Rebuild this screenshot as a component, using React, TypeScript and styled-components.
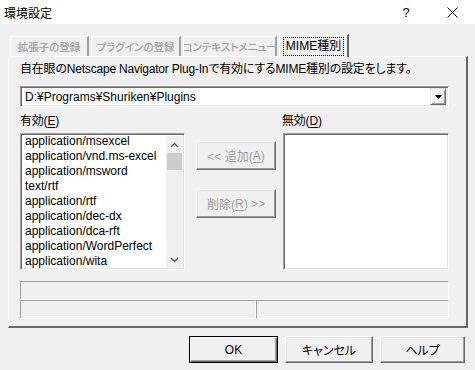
import React from 'react'
import styled, { createGlobalStyle } from 'styled-components'

const GlobalStyle = createGlobalStyle`
  html, body {
    margin: 0;
    padding: 0;
    background: #f0f0f0;
  }
  body {
    font-family: "Liberation Sans", "Noto Sans CJK JP", sans-serif;
    font-size: 12px;
    color: #000;
    font-feature-settings: "palt";
  }
`

const JP = `"Liberation Sans", "Noto Sans CJK JP", sans-serif`

const Window = styled.div`
  width: 475px;
  height: 370px;
  background: #f0f0f0;
  display: flex;
  flex-direction: column;
  overflow: hidden;
`

const TitleBar = styled.div`
  height: 24px;
  background: #fff;
  display: flex;
  align-items: center;
  padding-left: 4px;
  font-family: ${JP};
  font-size: 12px;
`

const Title = styled.span`
  flex: 1;
`

const TitleButton = styled.div`
  width: 46px;
  height: 24px;
  display: flex;
  align-items: center;
  justify-content: center;
  font-size: 13px;
`

const TabRow = styled.div`
  display: flex;
  align-items: flex-end;
  height: 23px;
  margin: 9px 0 0 10px;
  position: relative;
  z-index: 1;
`

const Tab = styled.div<{ $w: number; $active?: boolean }>`
  width: ${({ $w }) => $w}px;
  height: ${({ $active }) => ($active ? 23 : 20)}px;
  margin-right: ${({ $active }) => ($active ? 0 : 2)}px;
  margin-bottom: ${({ $active }) => ($active ? -1 : 0)}px;
  box-sizing: border-box;
  border-top: 1px solid #fff;
  border-left: 1px solid #fff;
  border-right: 2px solid ${({ $active }) => ($active ? '#696969' : '#a0a0a0')};
  background: #f0f0f0;
  display: flex;
  align-items: center;
  justify-content: center;
  font-family: ${JP};
  font-size: ${({ $active }) => ($active ? 12 : 10.5)}px;
  color: ${({ $active }) => ($active ? '#000' : '#a6a6a6')};
  text-shadow: ${({ $active }) => ($active ? 'none' : '0 0 1px #b8b8b8')};
  white-space: nowrap;
  overflow: hidden;
`

const Focus = styled.span`
  outline: 1px dotted #000;
  padding: 0 2px;
  line-height: 17px;
`

const Panel = styled.div`
  margin-left: 8px;
  width: 460px;
  height: 272px;
  box-sizing: border-box;
  border-top: 1px solid #fff;
  border-left: 1px solid #fff;
  border-right: 2px solid #696969;
  border-bottom: 2px solid #696969;
  padding: 5px 0 0 11px;
  display: flex;
  flex-direction: column;
`

const Label = styled.div<{ $w?: number }>`
  ${({ $w }) => ($w ? `width: ${$w}px;` : '')}
  font-family: ${JP};
  font-size: 12px;
  line-height: 15px;
  letter-spacing: -0.2px;
  white-space: nowrap;
`

const Key = styled.span`
  text-decoration: underline;
  text-underline-offset: 2px;
`

const Sunken = styled.div`
  box-sizing: border-box;
  background: #fff;
  border-top: 1px solid #a0a0a0;
  border-left: 1px solid #a0a0a0;
  border-right: 1px solid #fff;
  border-bottom: 1px solid #fff;
  box-shadow: inset 1px 1px #696969, inset -1px -1px #e3e3e3;
`

const Combo = styled(Sunken)`
  margin-top: 9px;
  width: 429px;
  height: 21px;
  display: flex;
  align-items: center;
  padding: 0 2px 0 4px;
  font-family: ${JP};
  font-size: 12px;
`

const ComboText = styled.span`
  flex: 1;
`

const ComboButton = styled.div`
  width: 16px;
  height: 17px;
  box-sizing: border-box;
  background: #f0f0f0;
  border-top: 1px solid #e3e3e3;
  border-left: 1px solid #e3e3e3;
  border-right: 1px solid #696969;
  border-bottom: 1px solid #696969;
  box-shadow: inset 1px 1px #fff, inset -1px -1px #a0a0a0;
  display: flex;
  align-items: center;
  justify-content: center;
`

const ListLabels = styled.div`
  display: flex;
  margin-top: 7px;
`

const Lists = styled.div`
  display: flex;
  margin-top: 4px;
`

const ListBox = styled(Sunken)<{ $w: number }>`
  width: ${({ $w }) => $w}px;
  height: 137px;
  display: flex;
  overflow: hidden;
`

const Items = styled.div`
  flex: 1;
  padding: 0 0 0 4px;
  font-family: ${JP};
  font-size: 12px;
  line-height: 15px;
  white-space: nowrap;
  overflow: hidden;
`

const ScrollBar = styled.div`
  width: 17px;
  margin: 2px 1px 1px 0;
  background: #f0f0f0;
  display: flex;
  flex-direction: column;
  align-items: center;
`

const ScrollArrow = styled.div`
  height: 17px;
  display: flex;
  align-items: center;
  justify-content: center;
`

const Thumb = styled.div`
  width: 15px;
  height: 17px;
  background: #cdcdcd;
`

const Track = styled.div`
  flex: 1;
`

const MoveButtons = styled.div`
  width: 98px;
  display: flex;
  flex-direction: column;
  padding: 8px 0 0 11px;
  gap: 19px;
  box-sizing: border-box;
`

const RaisedButton = styled.div<{ $w: number; $h: number; $default?: boolean; $disabled?: boolean }>`
  width: ${({ $w }) => $w}px;
  height: ${({ $h }) => $h}px;
  box-sizing: border-box;
  background: #f0f0f0;
  border-top: 1px solid ${({ $default }) => ($default ? '#000' : '#fff')};
  border-left: 1px solid ${({ $default }) => ($default ? '#000' : '#fff')};
  border-right: 1px solid ${({ $default }) => ($default ? '#000' : '#696969')};
  border-bottom: 1px solid ${({ $default }) => ($default ? '#000' : '#696969')};
  box-shadow: ${({ $default }) =>
    $default
      ? 'inset 1px 1px #fff, inset -1px -1px #696969, inset -2px -2px #a0a0a0'
      : 'inset -1px -1px #a0a0a0, inset 1px 1px #e3e3e3'};
  display: flex;
  align-items: center;
  justify-content: center;
  font-family: ${JP};
  font-size: 12px;
  color: ${({ $disabled }) => ($disabled ? '#a0a0a0' : '#000')};
  white-space: nowrap;
`

const StatusArea = styled.div`
  margin-top: 11px;
  width: 429px;
  display: flex;
  flex-direction: column;
`

const StatusRow = styled.div`
  display: flex;
`

const StatusCell = styled.div<{ $w?: number }>`
  ${({ $w }) => ($w ? `width: ${$w}px;` : 'flex: 1;')}
  height: 19px;
  box-sizing: border-box;
  border-top: 1px solid #a0a0a0;
  border-left: 1px solid #a0a0a0;
  border-right: 1px solid #fff;
  border-bottom: 1px solid #fff;
`

const Footer = styled.div`
  display: flex;
  justify-content: flex-end;
  gap: 7px;
  padding: 8px 10px 0 0;
`

const mimeTypes = [
  'application/msexcel',
  'application/vnd.ms-excel',
  'application/msword',
  'text/rtf',
  'application/rtf',
  'application/dec-dx',
  'application/dca-rft',
  'application/WordPerfect',
  'application/wita',
]

const Chevron = ({ up }: { up?: boolean }) => (
  <svg width="9" height="6" viewBox="0 0 9 6">
    <path d={up ? 'M1 5 L4.5 1.5 L8 5' : 'M1 1 L4.5 4.5 L8 1'} fill="none" stroke="#606060" strokeWidth="1.4" />
  </svg>
)

export default function App() {
  return (
    <Window>
      <GlobalStyle />
      <TitleBar>
        <Title>環境設定</Title>
        <TitleButton>?</TitleButton>
        <TitleButton>
          <svg width="11" height="11" viewBox="0 0 11 11">
            <path d="M0.5 0.5 L10.5 10.5 M10.5 0.5 L0.5 10.5" stroke="#000" strokeWidth="1" />
          </svg>
        </TitleButton>
      </TitleBar>

      <TabRow>
        <Tab $w={79}>拡張子の登録</Tab>
        <Tab $w={90}>プラグインの登録</Tab>
        <Tab $w={94}>コンテキストメニュー</Tab>
        <Tab $w={70} $active>
          <Focus>MIME種別</Focus>
        </Tab>
      </TabRow>

      <Panel>
        <Label>自在眼のNetscape Navigator Plug-Inで有効にするMIME種別の設定をします。</Label>
        <Combo>
          <ComboText>D:¥Programs¥Shuriken¥Plugins</ComboText>
          <ComboButton>
            <svg width="7" height="4" viewBox="0 0 7 4">
              <path d="M0 0 H7 L3.5 4 Z" fill="#000" />
            </svg>
          </ComboButton>
        </Combo>

        <ListLabels>
          <Label $w={262}>
            有効(<Key>E</Key>)
          </Label>
          <Label>
            無効(<Key>D</Key>)
          </Label>
        </ListLabels>

        <Lists>
          <ListBox $w={165}>
            <Items>
              {mimeTypes.map((t) => (
                <div key={t}>{t}</div>
              ))}
            </Items>
            <ScrollBar>
              <ScrollArrow>
                <Chevron up />
              </ScrollArrow>
              <Thumb />
              <Track />
              <ScrollArrow>
                <Chevron />
              </ScrollArrow>
            </ScrollBar>
          </ListBox>

          <MoveButtons>
            <RaisedButton $w={80} $h={29} $disabled>
              &lt;&lt; 追加(<Key>A</Key>)
            </RaisedButton>
            <RaisedButton $w={80} $h={29} $disabled>
              削除(<Key>R</Key>) &gt;&gt;
            </RaisedButton>
          </MoveButtons>

          <ListBox $w={166} />
        </Lists>

        <StatusArea>
          <StatusRow>
            <StatusCell />
          </StatusRow>
          <StatusRow>
            <StatusCell $w={236} />
            <StatusCell />
          </StatusRow>
        </StatusArea>
      </Panel>

      <Footer>
        <RaisedButton $w={89} $h={27} $default>
          OK
        </RaisedButton>
        <RaisedButton $w={88} $h={27}>
          キャンセル
        </RaisedButton>
        <RaisedButton $w={85} $h={27}>
          ヘルプ
        </RaisedButton>
      </Footer>
    </Window>
  )
}
